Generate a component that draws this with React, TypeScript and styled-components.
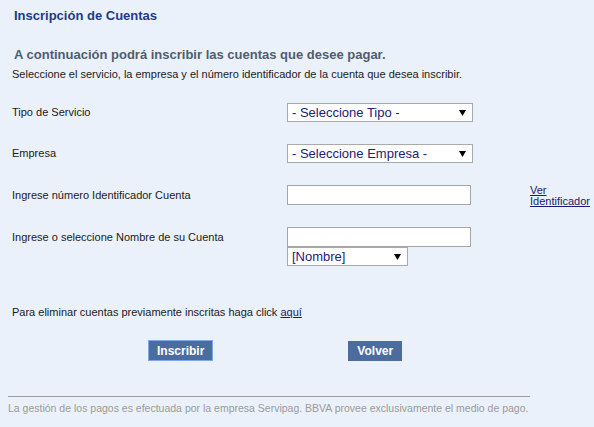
import React from "react";
import styled, { createGlobalStyle } from "styled-components";

const Global = createGlobalStyle`
  html, body { margin: 0; padding: 0; background: #ebf1fa; }
  body { font-family: "Liberation Sans", Arial, sans-serif; }
  * { box-sizing: border-box; }
`;

const Page = styled.div`
  width: 594px;
  min-height: 427px;
  padding-top: 8px;
  background: #ebf1fa;
`;

const Title = styled.h1`
  margin: 0 0 0 14px;
  font-size: 13px;
  line-height: 16px;
  font-weight: bold;
  color: #1e3a8a;
`;

const Heading = styled.h2`
  margin: 23px 0 0 14px;
  font-size: 13px;
  line-height: 16px;
  font-weight: bold;
  color: #4f5d6e;
`;

const Intro = styled.p`
  margin: 5px 0 0 12px;
  font-size: 11px;
  line-height: 13px;
  color: #1a1a1a;
`;

const Form = styled.div`
  margin: 22px 0 0 12px;
  display: flex;
  flex-direction: column;
  gap: 22px;
`;

const Row = styled.div`
  display: grid;
  grid-template-columns: 275px 243px auto;
  align-items: start;
`;

const Label = styled.div<{ $h: number }>`
  font-size: 11px;
  line-height: ${(p) => p.$h}px;
  color: #1a1a1a;
`;

const Controls = styled.div`
  display: flex;
  flex-direction: column;
  align-items: flex-start;
`;

const arrow =
  "url(\"data:image/svg+xml;utf8,<svg xmlns='http://www.w3.org/2000/svg' width='8' height='7'><path d='M0 0 L8 0 L4 7 Z' fill='black'/></svg>\")";

const Select = styled.select<{ $w: number }>`
  appearance: none;
  -webkit-appearance: none;
  width: ${(p) => p.$w}px;
  height: 19px;
  margin: 0;
  padding: 0 0 0 4px;
  border: 1px solid #a9a9a9;
  border-radius: 0;
  background: #fff ${arrow} no-repeat right 6px center;
  background-size: 7px 6px;
  font-family: "Liberation Sans", Arial, sans-serif;
  font-size: 13px;
  line-height: 17px;
  color: #1c2270;
  outline: none;
`;

const Input = styled.input`
  width: 184px;
  height: 20px;
  margin: 0;
  padding: 0 3px;
  border: 1px solid #a6a6a6;
  border-radius: 0;
  background: #fff;
  font-family: "Liberation Sans", Arial, sans-serif;
  font-size: 13px;
  outline: none;
`;

const SideLink = styled.a`
  display: block;
  height: 20px;
  font-size: 11px;
  line-height: 11px;
  color: #1a1a6e;
  text-decoration: underline;
`;

const Note = styled.p`
  margin: 40px 0 0 12px;
  font-size: 11px;
  line-height: 13px;
  color: #1a1a1a;
`;

const InlineLink = styled.a`
  color: #1a1a6e;
  text-decoration: underline;
`;

const Buttons = styled.div`
  margin: 21px 0 0 148px;
  display: flex;
  align-items: flex-start;
  gap: 135px;
`;

const Button = styled.button<{ $focused?: boolean }>`
  height: ${(p) => (p.$focused ? 21 : 20)}px;
  margin-top: ${(p) => (p.$focused ? 0 : 1)}px;
  padding: 0 ${(p) => (p.$focused ? 8 : 9)}px;
  border: ${(p) => (p.$focused ? "1px solid #7fa8ec" : "none")};
  border-radius: 0;
  background: #4d6c9e;
  color: #fff;
  font-family: "Liberation Sans", Arial, sans-serif;
  font-size: 12px;
  font-weight: bold;
  cursor: pointer;
`;

const Footer = styled.div`
  margin: 35px 0 0 8px;
  width: 522px;
  border-top: 1px solid #9c9c9c;
  padding-top: 5px;
  font-size: 10.5px;
  line-height: 13px;
  color: #9a9a9a;
  white-space: nowrap;
`;

export default function App() {
  return (
    <Page>
      <Global />
      <Title>Inscripción de Cuentas</Title>
      <Heading>A continuación podrá inscribir las cuentas que desee pagar.</Heading>
      <Intro>
        Seleccione el servicio, la empresa y el número identificador de la cuenta que desea inscribir.
      </Intro>
      <Form>
        <Row>
          <Label $h={19}>Tipo de Servicio</Label>
          <Controls>
            <Select $w={186} defaultValue="">
              <option value="">- Seleccione Tipo -</option>
            </Select>
          </Controls>
        </Row>
        <Row>
          <Label $h={19}>Empresa</Label>
          <Controls>
            <Select $w={186} defaultValue="">
              <option value="">- Seleccione Empresa -</option>
            </Select>
          </Controls>
        </Row>
        <Row>
          <Label $h={20}>Ingrese número Identificador Cuenta</Label>
          <Controls>
            <Input type="text" />
          </Controls>
          <SideLink href="#">
            Ver
            <br />
            Identificador
          </SideLink>
        </Row>
        <Row>
          <Label $h={20}>Ingrese o seleccione Nombre de su Cuenta</Label>
          <Controls>
            <Input type="text" />
            <Select $w={121} defaultValue="">
              <option value="">[Nombre]</option>
            </Select>
          </Controls>
        </Row>
      </Form>
      <Note>
        Para eliminar cuentas previamente inscritas haga click <InlineLink href="#">aquí</InlineLink>
      </Note>
      <Buttons>
        <Button $focused>Inscribir</Button>
        <Button>Volver</Button>
      </Buttons>
      <Footer>
        La gestión de los pagos es efectuada por la empresa Servipag. BBVA provee exclusivamente el medio de pago.
      </Footer>
    </Page>
  );
}
